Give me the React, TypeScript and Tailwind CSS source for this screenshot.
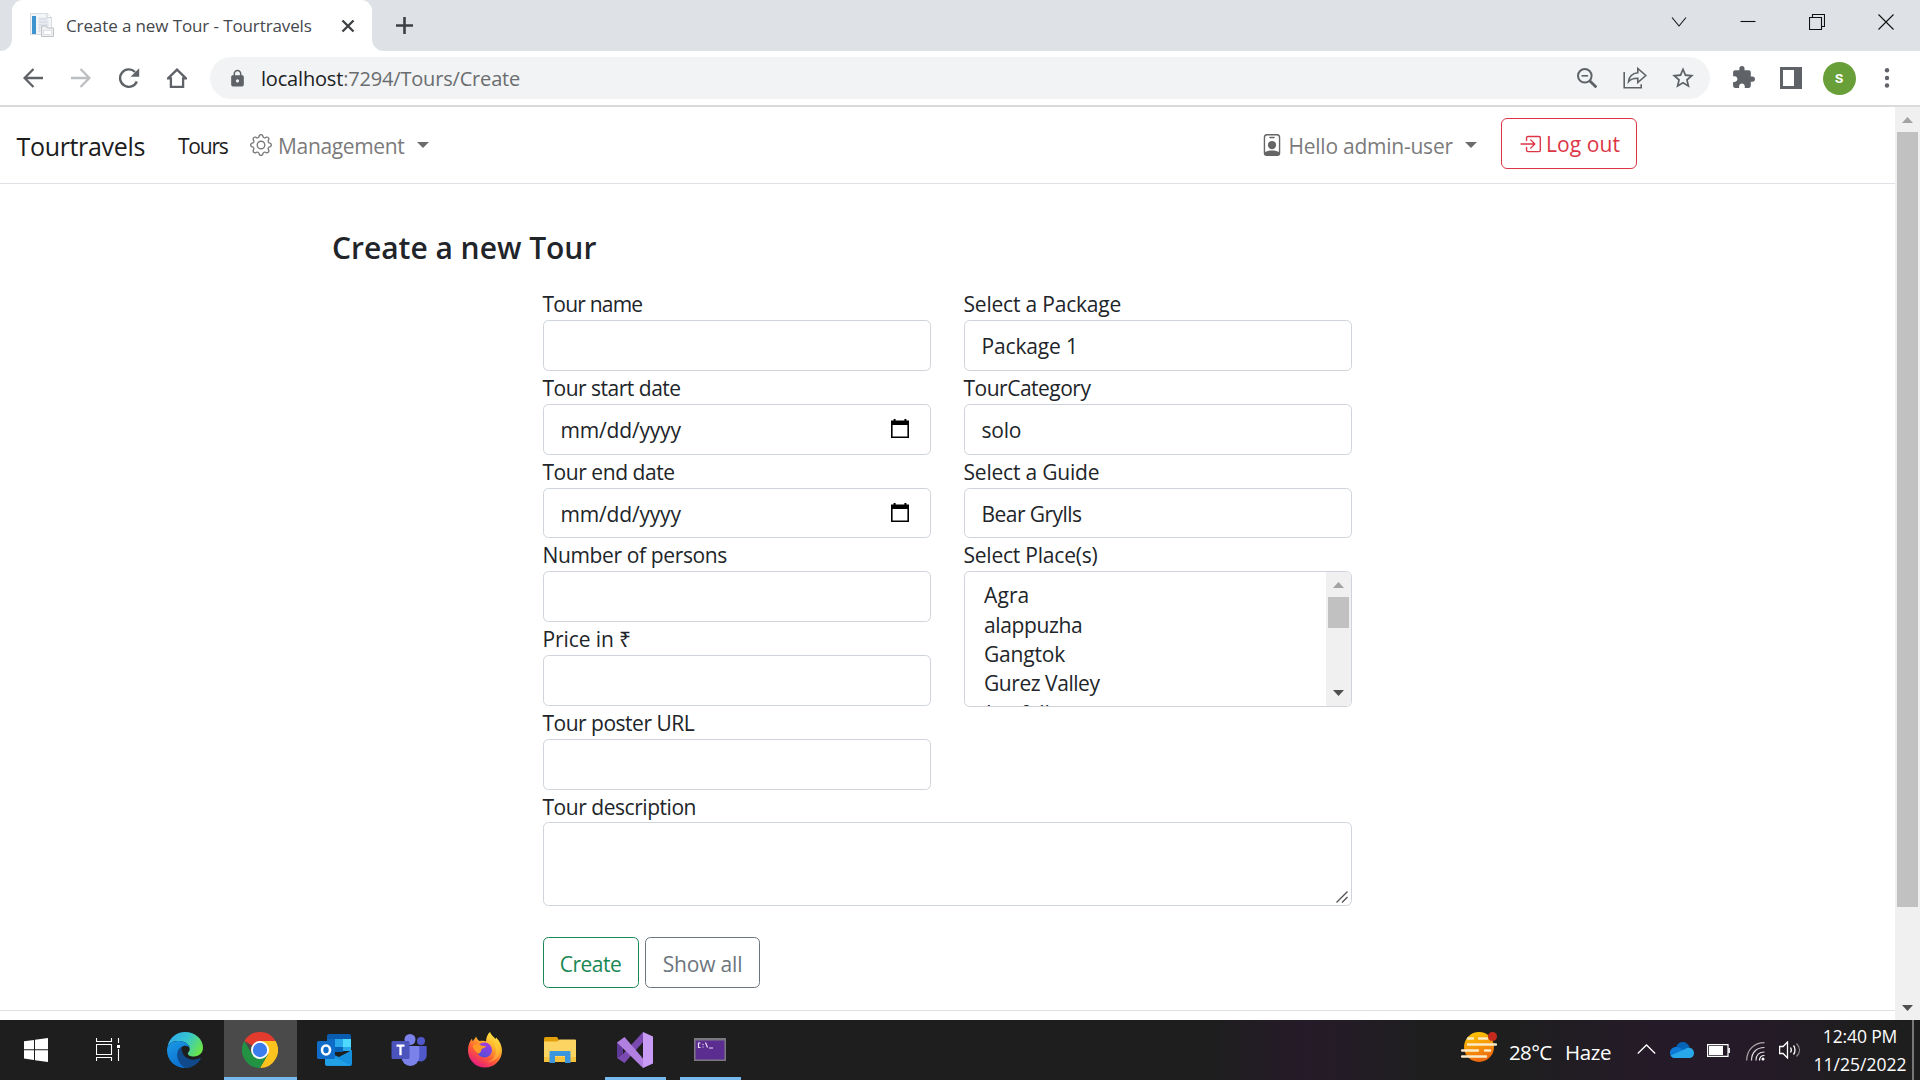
import type { ReactNode } from "react";
import { BsBoxArrowInRight, BsGear, BsPersonBadge } from "react-icons/bs";
import { MdExtension, MdLock, MdStarBorder } from "react-icons/md";

function TabStrip() {
  return (
    <div className="flex h-[51px] items-stretch bg-[#dee1e6]">
      <div className="w-3 bg-white">
        <div className="h-full w-full rounded-br-[12px] bg-[#dee1e6]" />
      </div>
      <div className="flex w-[360px] items-center rounded-t-[11px] bg-white pl-[18px]">
        <svg className="mb-px h-6 w-6 shrink-0" viewBox="0 0 24 24">
          <path d="M.5.5h17l4 4V21.500H.5z" fill="#f4f5f7" stroke="#cfd3d8" strokeWidth="0.8" />
          <path d="M17 .5v4h4.500" fill="#fff" stroke="#b8bcc2" strokeWidth="0.7" />
          <rect x="2" y="3" width="4" height="18" fill="#3d94cf" />
          <path d="M8.500 6h9M8.500 9h10M8.500 12h10M8.500 15h2M8.500 18h2" stroke="#dde2ea" strokeWidth="2.400" />
          <path d="M11.500 13h5l1 2h6v8.500h-12z" fill="#eff0f2" stroke="#b3b6ba" strokeWidth="0.8" />
          <rect x="13.500" y="17.500" width="8" height="4" fill="#fff" stroke="#cfd3d8" strokeWidth="0.6" />
        </svg>
        <span className="ml-[12px] w-[258px] text-[17px] tracking-[-0.110px] text-[#45484d]">
          Create a new Tour - Tourtravels
        </span>
        <svg className="ml-[17px] h-[14px] w-[14px] shrink-0" viewBox="0 0 14 14">
          <path d="M1.500 1.500l11 11M12.500 1.500l-11 11" stroke="#3c4043" strokeWidth="2.300" />
        </svg>
      </div>
      <div className="w-3 bg-white">
        <div className="h-full w-full rounded-bl-[12px] bg-[#dee1e6]" />
      </div>
      <svg className="ml-[12px] mt-[17px] h-[17px] w-[17px]" viewBox="0 0 17 17">
        <path d="M8.500 0v17M0 8.500h17" stroke="#3c4043" strokeWidth="2.600" />
      </svg>
      <div className="ml-auto flex h-[43px] items-center">
        <WindowButton>
          <path d="M1 3.500l7 8.500 7-8.500" />
        </WindowButton>
        <WindowButton>
          <path d="M.5 7.500h15" />
        </WindowButton>
        <WindowButton>
          <path d="M.5 3.500h12v12H.5zM3.500 3.500V.5h12v12h-3" />
        </WindowButton>
        <WindowButton>
          <path d="M.5.5l15 15M15.500.5l-15 15" />
        </WindowButton>
      </div>
    </div>
  );
}

function WindowButton({ children }: { children: ReactNode }) {
  return (
    <button className="flex w-[69px] justify-center">
      <svg className="h-4 w-4" viewBox="0 0 16 16" fill="none" stroke="#111" strokeWidth="1.100">
        {children}
      </svg>
    </button>
  );
}

function Cell({ children }: { children: ReactNode }) {
  return <button className="flex h-full w-12 shrink-0 items-center justify-center">{children}</button>;
}

function Toolbar() {
  return (
    <div className="flex h-[56px] items-start border-b-2 border-[#d9dadc] bg-white pl-[9px] text-[#5f6368]">
      <div className="mt-[6px] flex h-[42px] items-center">
        <Cell>
          <svg className="h-5 w-5" viewBox="0 0 20 20" fill="none" stroke="#5f6368" strokeWidth="2.300">
            <path d="M20 10H2M10.500 1L1.600 10l8.900 9" />
          </svg>
        </Cell>
        <Cell>
          <svg className="h-5 w-5" viewBox="0 0 20 20" fill="none" stroke="#bcbec1" strokeWidth="2.300">
            <path d="M0 10h18M9.500 1l8.900 9-8.900 9" />
          </svg>
        </Cell>
        <Cell>
          <svg className="h-5 w-5.5" viewBox="0 0 22 20">
            <path d="M18.800 13.500A8.700 8.700 0 1 1 17 4" fill="none" stroke="#5f6368" strokeWidth="2.400" />
            <path d="M21.200.2v8.600h-8.600z" fill="#5f6368" />
          </svg>
        </Cell>
        <Cell>
          <svg className="h-5 w-5" viewBox="0 0 20 20" fill="none" stroke="#5f6368" strokeWidth="2.300">
            <path d="M1 10.400L10 1.600l9 8.800h-2.900v8.400H3.900v-8.400z" />
          </svg>
        </Cell>
      </div>
      <div className="ml-[9px] mt-[6px] flex h-[42px] w-[1500px] items-center rounded-full bg-[#f1f3f4] pl-[17.500px]">
        <MdLock size={19} />
        <span className="ml-[14.500px] pt-[2px] text-[20px] tracking-[-0.180px] text-[#6a6d70]">
          <span className="text-[#202124]">localhost</span>:7294/Tours/Create
        </span>
        <div className="ml-auto mr-[3px] flex h-full items-center">
          <Cell>
            <svg className="h-5 w-5" viewBox="0 0 20 20" fill="none" stroke="#5f6368">
              <circle cx="7.800" cy="7.800" r="6.800" strokeWidth="2" />
              <path d="M12.400 12.400l7 7" strokeWidth="2.800" />
              <path d="M4.500 7.800h6.600" strokeWidth="1.600" />
            </svg>
          </Cell>
          <Cell>
            <svg className="h-[22px] w-6" viewBox="0 0 24 22" fill="none" stroke="#5f6368" strokeWidth="1.600">
              <path d="M1.200 5v15.800h17v-3.500" />
              <path d="M5.500 14.800c.6-6 4.200-8.500 9.300-9V1.500l8 7-8 7v-4.200c-4-.1-7 .8-9.300 3.500z" />
            </svg>
          </Cell>
          <Cell>
            <MdStarBorder size={26} />
          </Cell>
        </div>
      </div>
      <div className="ml-[9px] mt-[6px] flex h-[42px] items-center">
        <Cell>
          <MdExtension size={25} className="mb-px" />
        </Cell>
        <Cell>
          <svg className="h-[22px] w-[22px]" viewBox="0 0 22 22">
            <rect width="22" height="22" fill="#5f6368" />
            <rect x="3" y="3" width="11" height="16" fill="#fff" />
          </svg>
        </Cell>
        <Cell>
          <span className="flex h-[33px] w-[33px] items-center justify-center rounded-full bg-[#689f38] font-[Roboto] text-[17px] font-medium text-white">
            s
          </span>
        </Cell>
        <Cell>
          <svg className="h-5 w-5" viewBox="0 0 20 20" fill="#5f6368">
            <circle cx="10" cy="2.200" r="2.200" />
            <circle cx="10" cy="10" r="2.200" />
            <circle cx="10" cy="17.500" r="2.200" />
          </svg>
        </Cell>
      </div>
    </div>
  );
}

function Caret() {
  return (
    <svg className="h-[6px] w-3" viewBox="0 0 12 6">
      <path d="M0 0h12L6 6z" fill="#6c6c6c" />
    </svg>
  );
}

function Navbar() {
  return (
    <nav className="flex h-[77px] items-center border-b border-[#dee2e6] text-[21px] text-[#7b7b7b]">
      <a className="ml-[16.500px] w-[161.500px] pt-[3px] text-[25px] tracking-[-0.330px] text-[#1c1c1c]">Tourtravels</a>
      <a className="w-[72px] pt-1 tracking-[-1.200px] text-[#1c1c1c]">Tours</a>
      <a className="flex w-[179px] items-center">
        <BsGear size={22} />
        <span className="ml-[6px] w-[138.500px] pt-1 tracking-[-0.340px]">Management</span>
        <Caret />
      </a>
      <a className="ml-auto flex items-center">
        <BsPersonBadge size={22} className="text-[#666]" />
        <span className="ml-[5.500px] w-[176px] pt-1 tracking-[-0.240px]">Hello admin-user</span>
        <Caret />
      </a>
      <button className="mb-[3px] ml-[24.500px] mr-[258px] flex h-[51px] w-[136px] items-center rounded-[6px] border border-[#dc3545] pl-[17px] text-[#dc3545]">
        <BsBoxArrowInRight size={22} />
        <span className="ml-[5px] whitespace-nowrap pt-[3px] tracking-[0.100px]">Log out</span>
      </button>
    </nav>
  );
}

const boxClass =
  "flex h-[50.800px] items-center rounded-[5.500px] border border-[#ced4da] bg-white pl-[17px] pt-[2.500px] leading-[33px]";

function Field({ label, labelClass, children }: { label: string; labelClass: string; children?: ReactNode }) {
  return (
    <label className="block">
      <span className={`block h-[33px] leading-[35px] ${labelClass}`}>{label}</span>
      <span className={boxClass}>{children}</span>
    </label>
  );
}

function DateValue() {
  return (
    <>
      <span className="tracking-[-0.180px]">mm/dd/yyyy</span>
      <svg className="mb-[3px] ml-auto mr-[21px] h-5 w-[18px]" viewBox="0 0 18 20">
        <path d="M.8 3.500h16.400v14.800H.8z" fill="none" stroke="#000" strokeWidth="1.600" />
        <path d="M0 1.500h18V6H0zM2.600 0h2v2h-2zM13.400 0h2v2h-2z" fill="#000" />
      </svg>
    </>
  );
}

function Arrow({ up }: { up?: boolean }) {
  return (
    <svg className="h-[6px] w-[11px]" viewBox="0 0 11 6">
      {up ? <path d="M0 6h11L5.500 0z" fill="#a3a3a3" /> : <path d="M0 0h11L5.500 6z" fill="#505050" />}
    </svg>
  );
}

function PlacesList() {
  return (
    <div className="flex h-[135.500px] overflow-hidden rounded-[5.500px] border border-[#ced4da]">
      <ul className="flex-1 pl-[19.500px] pt-[9px] leading-[29.300px]">
        <li className="tracking-[0.100px]">Agra</li>
        <li className="tracking-[-0.380px]">alappuzha</li>
        <li className="tracking-[-0.180px]">Gangtok</li>
        <li className="tracking-[-0.450px]">Gurez Valley</li>
        <li className="pl-[2px] tracking-[-0.100px]">Jog falls</li>
      </ul>
      <div className="flex w-[25px] flex-col items-center bg-[#f0f0f0] pb-[10px] pt-[10px]">
        <Arrow up />
        <div className="mt-[9px] h-[31px] w-[21px] bg-[#c1c1c1]" />
        <div className="mt-auto flex">
          <Arrow />
        </div>
      </div>
    </div>
  );
}

function TourForm() {
  return (
    <main className="flex-1 text-[21px] text-[#212529]">
      <h1 className="ml-[332px] pt-[41px] text-[30px] font-[560] leading-[46px] tracking-[-0.020px]">
        Create a new Tour
      </h1>
      <div className="ml-[542.500px] mt-[16px] w-[809px]">
        <div className="grid grid-cols-2 gap-x-[33px]">
          <div>
            <Field label="Tour name" labelClass="tracking-[-0.780px]" />
            <Field label="Tour start date" labelClass="tracking-[-0.500px]">
              <DateValue />
            </Field>
            <Field label="Tour end date" labelClass="tracking-[-0.450px]">
              <DateValue />
            </Field>
            <Field label="Number of persons" labelClass="tracking-[-0.370px]" />
            <Field label="Price in ₹" labelClass="tracking-[-0.100px]" />
            <Field label="Tour poster URL" labelClass="tracking-[-0.500px]" />
          </div>
          <div>
            <Field label="Select a Package" labelClass="tracking-[-0.200px]">
              <span className="tracking-[-0.150px]">Package 1</span>
            </Field>
            <Field label="TourCategory" labelClass="tracking-[-0.500px]">
              <span className="tracking-[-0.240px]">solo</span>
            </Field>
            <Field label="Select a Guide" labelClass="tracking-[-0.200px]">
              <span className="tracking-[-0.550px]">Bear Grylls</span>
            </Field>
            <div className="h-[33px] leading-[35px] tracking-[-0.220px]">Select Place(s)</div>
            <PlacesList />
          </div>
        </div>
        <div className="h-[32.200px] leading-[35px] tracking-[-0.460px]">Tour description</div>
        <div className="flex h-[84px] items-end justify-end rounded-[5.500px] border border-[#ced4da] p-[2px]">
          <svg className="mr-px h-3 w-3" viewBox="0 0 12 12" stroke="#555" strokeWidth="1.400">
            <path d="M.5 11.500l11-11M6 11.500L11.500 6" />
          </svg>
        </div>
        <div className="mt-[31.500px] flex gap-[6px]">
          <button className="h-[51px] w-24 rounded-[5.500px] border border-[#198754] pt-[3px] tracking-[-0.520px] text-[#198754]">
            Create
          </button>
          <button className="h-[51px] w-[115px] rounded-[5.500px] border border-[#6c757d] pl-px pt-[3px] tracking-[-0.180px] text-[#6c757d]">
            Show all
          </button>
        </div>
      </div>
      <div className="mt-[22px] border-t border-[#dee2e6]" />
    </main>
  );
}

function PageScrollbar() {
  return (
    <div className="flex w-[25px] flex-col items-center bg-[#f0f0f0] pb-[9px] pt-[10px]">
      <Arrow up />
      <div className="mt-[9px] h-[775px] w-[21px] bg-[#c1c1c1]" />
      <div className="mt-auto flex">
        <Arrow />
      </div>
    </div>
  );
}

function TaskButton({ children, bar }: { children: ReactNode; bar?: boolean }) {
  return (
    <div className="flex w-[75px] shrink-0 flex-col items-center">
      <div className="flex h-[57px] items-center pt-[3px]">{children}</div>
      {bar && <div className="h-[3px] w-[61px] bg-[#76b9ed]" />}
    </div>
  );
}

function EdgeIcon() {
  return (
    <svg className="h-9 w-9" viewBox="0 0 36 36">
      <defs>
        <linearGradient id="edgeTop" x1="0" y1="0.200" x2="1" y2="0.600">
          <stop offset="0" stopColor="#2fa8ee" />
          <stop offset="0.500" stopColor="#35c6d0" />
          <stop offset="1" stopColor="#6be548" />
        </linearGradient>
        <linearGradient id="edgeLeft" x1="0" y1="0" x2="0.500" y2="1">
          <stop offset="0" stopColor="#1b9be6" />
          <stop offset="1" stopColor="#0a6fd0" />
        </linearGradient>
      </defs>
      <path
        d="M.5 14.500C2.500 5.500 9.500 0 18 0c10.500 0 18 7.500 18 15.500 0 5.500-4 8.900-8.900 8.900-4.600 0-6.300-1.600-6.300-3 0-1 1.900-1.800 1.900-4.400C22.700 12.500 18 9 11.500 9 6.500 9 2.500 11 .5 14.500z"
        fill="url(#edgeTop)"
      />
      <path
        d="M0 18C0 12.500 5 9 11.500 9c6.500 0 10.500 3 11.200 7-2-2.600-6-3-8.700-.5-5 4.500-4 14.500 4.500 20.500C8 36 0 28.500 0 18z"
        fill="url(#edgeLeft)"
      />
      <path
        d="M14.500 15c-6.500 3-6 15 3.500 21 6.500.3 12.500-3.500 15.700-9 .4-.8-.3-1.200-1-.8-8.700 4-18.200-.2-18.200-11.200z"
        fill="#114a8b"
      />
    </svg>
  );
}

function ChromeIcon() {
  return (
    <svg className="h-9 w-9" viewBox="0 0 36 36">
      <path d="M18 18L2.410 9A18 18 0 0 1 33.590 9z" fill="#e33b2e" />
      <path d="M18 9h15.590A18 18 0 0 1 18 36l7.800-13.500z" fill="#fcc31e" />
      <path d="M2.410 9l7.800 13.500L18 27l7.800-4.500L18 36A18 18 0 0 1 2.410 9z" fill="#229342" />
      <circle cx="18" cy="18" r="9" fill="#fff" />
      <circle cx="18" cy="18" r="7.200" fill="#3b7ded" />
    </svg>
  );
}

function OutlookIcon() {
  return (
    <svg className="mr-[2px] h-9 w-9" viewBox="0 0 36 36">
      <path d="M11 4a2 2 0 0 1 2-2h20a2 2 0 0 1 2 2v14H11z" fill="#0a5cb0" />
      <path d="M11 7h8v9h-8z" fill="#0f6bbf" />
      <path d="M19 7h8v8h-8z" fill="#28a8ea" />
      <path d="M27 7h8v8h-8z" fill="#50d9ff" />
      <path d="M19 15h8v5h-8z" fill="#0364b8" />
      <path d="M27 15h8v4h-8z" fill="#28a8ea" />
      <path d="M9 19l14 6 13-7v14a2 2 0 0 1-2 2H11a2 2 0 0 1-2-2z" fill="#1490df" />
      <path d="M9 20l26 13.500H11a2 2 0 0 1-2-2z" fill="#28a8ea" opacity="0.700" />
      <rect x="1" y="9" width="18" height="18" rx="1.500" fill="#0f6cc9" />
      <ellipse cx="10" cy="18" rx="4" ry="4.500" fill="none" stroke="#fff" strokeWidth="2.600" />
    </svg>
  );
}

function TeamsIcon() {
  return (
    <svg className="mr-[2px] h-9 w-9" viewBox="0 0 36 36">
      <circle cx="30" cy="9" r="4" fill="#5059c9" />
      <path d="M26 14h8.500a1.200 1.200 0 0 1 1.200 1.200V23c0 4-3 6.500-6 6.500-2.500 0-4-1-5-2.500z" fill="#5059c9" />
      <circle cx="19" cy="7.500" r="5.500" fill="#7b83eb" />
      <path d="M10.500 14H27a1.300 1.300 0 0 1 1.300 1.300V25a8.900 8.900 0 0 1-17.800 0z" fill="#7b83eb" />
      <rect x="0.500" y="9" width="18" height="18" rx="1.500" fill="#4b53bc" />
      <path d="M5.500 13.700h8M9.500 13.700v9.500" stroke="#fff" strokeWidth="2.300" />
    </svg>
  );
}

function FirefoxIcon() {
  return (
    <svg className="h-9 w-9" viewBox="0 0 36 36">
      <defs>
        <linearGradient id="fox" x1="0.850" y1="0" x2="0.250" y2="1">
          <stop offset="0" stopColor="#fff44f" />
          <stop offset="0.350" stopColor="#ffb42a" />
          <stop offset="0.650" stopColor="#ff5a36" />
          <stop offset="1" stopColor="#e31587" />
        </linearGradient>
        <linearGradient id="foxGlobe" x1="0.700" y1="0" x2="0.300" y2="1">
          <stop offset="0" stopColor="#a43be0" />
          <stop offset="1" stopColor="#4f4fd8" />
        </linearGradient>
      </defs>
      <path
        d="M23 0c1 3 3.500 4.500 5.500 7l.7-1.500C33 9.500 35 14 35 18.500 35 28 27.500 35.500 18 35.500S1 28 1 18.500c0-5 1.500-9 4-12l.7 3C7 7 8.500 6 9 4.500c1 2 2 3.500 3.500 4.500 3-.5 6 0 6.500.5C19 6 20.500 2 23 0z"
        fill="url(#fox)"
      />
      <path d="M27 12c4 6 2 16-7 18 9 .5 14-7 12-14-1-3-3-5-4-8z" fill="#ffd23c" opacity="0.450" />
      <circle cx="17.500" cy="18" r="7.500" fill="url(#foxGlobe)" />
      <path
        d="M5.500 14c2.500-2 5-2 7-1.500 1.500 1 4.500 1.500 6.500 1.500-.5 2-3.500 2-4.500 3.500-1 2-.5 3.500-3 4-2.500-1.500-5-4-6-7.500z"
        fill="#ff9a26"
      />
    </svg>
  );
}

function ExplorerIcon() {
  return (
    <svg className="h-9 w-9" viewBox="0 0 36 36">
      <path d="M2 6.500A1.500 1.500 0 0 1 3.500 5H15l2 3-3 3H2z" fill="#e2a008" />
      <path d="M2 9.500h13l2.500-2H33a1 1 0 0 1 1 1V29a1 1 0 0 1-1 1H3a1 1 0 0 1-1-1z" fill="#fcd462" />
      <path d="M2 25h32v4a1 1 0 0 1-1 1H3a1 1 0 0 1-1-1z" fill="#f8c33c" />
      <path d="M7.500 31V20a1 1 0 0 1 1-1h19a1 1 0 0 1 1 1v11h-5.500v-7H13v7z" fill="#3a96dd" />
    </svg>
  );
}

function VisualStudioIcon() {
  return (
    <svg className="h-9 w-9" viewBox="0 0 36 36">
      <path d="M0 10.500L6 14v8l-6 4z" fill="#5f3796" />
      <path d="M0 26l6-4L26 0v10L7.500 31z" fill="#7a4ab0" />
      <path d="M0 10.500L7.500 5 26 26.500V36z" fill="#b07fe0" />
      <path d="M26 0l10 4.500v27L26 36z" fill="#c89bf5" />
    </svg>
  );
}

function TerminalIcon() {
  return (
    <svg className="h-9 w-9" viewBox="0 0 36 36">
      <rect x="2" y="6" width="32" height="23" fill="#7b7880" />
      <rect x="3.500" y="8.500" width="29" height="19" fill="#5c2d91" />
      <path
        d="M8.500 11H6.500v4.500h2M11 12v1M11 14.500v1M13.500 10.500l2 5M17 16h4"
        fill="none"
        stroke="#e6dcf0"
        strokeWidth="1.200"
      />
    </svg>
  );
}

function Taskbar() {
  return (
    <div className="flex h-[60px] bg-[#1e1e1e] bg-[linear-gradient(90deg,transparent_63%,#261b29_68%,#1e1e1f_74%,#1e1e1f_79%,#251b28_86%,#251a28_91%,#1e1e1e_97%)] text-white">
      <div className="flex w-[72px] items-center justify-center">
        <svg className="h-6 w-6" viewBox="0 0 24 24" fill="#fff">
          <path d="M0 3.300l10-1.400v9.400H0zM11 1.700L24 0v11.300H11zM0 12.300h10v9.600L0 20.600zM11 12.300h13V24l-13-1.800z" />
        </svg>
      </div>
      <div className="flex w-[75.500px] items-center pl-6">
        <svg className="h-6 w-[25px]" viewBox="0 0 25 24" fill="none" stroke="#fff" strokeWidth="1.100">
          <path d="M.5 0v3.500h15V0M.5 6.500h15v10H.5zM.5 23v-3.500h15V23M22.500 0v5M22.500 11v12" />
          <rect x="21" y="7" width="3" height="3" fill="#fff" stroke="none" />
        </svg>
      </div>
      <TaskButton>
        <EdgeIcon />
      </TaskButton>
      <div className="ml-[1.500px] flex w-[73px] flex-col items-center bg-[#4a4a4a]">
        <div className="flex h-[57px] items-center pr-px pt-[3px]">
          <ChromeIcon />
        </div>
        <div className="h-[3px] w-full bg-[#76b9ed]" />
      </div>
      <div className="w-[0.500px]" />
      <TaskButton>
        <OutlookIcon />
      </TaskButton>
      <TaskButton>
        <TeamsIcon />
      </TaskButton>
      <TaskButton>
        <FirefoxIcon />
      </TaskButton>
      <TaskButton>
        <ExplorerIcon />
      </TaskButton>
      <TaskButton bar>
        <VisualStudioIcon />
      </TaskButton>
      <TaskButton bar>
        <TerminalIcon />
      </TaskButton>
      <div className="ml-auto flex items-center">
        <svg className="mb-[6px] h-[31px] w-9" viewBox="0 0 36 31">
          <defs>
            <linearGradient id="haze" x1="0" y1="0" x2="0.300" y2="1">
              <stop offset="0" stopColor="#ffd000" />
              <stop offset="1" stopColor="#ee6a10" />
            </linearGradient>
          </defs>
          <circle cx="18" cy="15" r="15" fill="url(#haze)" />
          <g stroke="#fdebc8" strokeWidth="2.400" strokeLinecap="round">
            <path d="M7 6.500h5M18 6.500h8M7 12.500h28M1 18.500h16M24 18.500h5M1 24.500h24" />
          </g>
          <circle cx="31.500" cy="4.500" r="4.500" fill="#c42b1c" />
        </svg>
        <span className="ml-[12px] w-[56px] pt-[5px] text-[20.500px] tracking-[-0.640px]">28°C</span>
        <span className="w-[72px] pt-[5px] text-[20.500px] tracking-[-0.400px]">Haze</span>
        <svg className="mb-[2px] h-[10px] w-[19px]" viewBox="0 0 19 10" fill="none" stroke="#fff" strokeWidth="1.300">
          <path d="M.8 9.500l8.700-8.500 8.700 8.500" />
        </svg>
        <svg className="ml-[14px] h-4 w-6" viewBox="0 0 24 16">
          <path d="M6 7C6 3 9 0 12.500 0 16 0 18.500 2 19.500 5L12 11z" fill="#0364b8" />
          <path d="M0 11c0-3.500 2.500-6 6-6 3 0 5 1.500 8 3.500L8 16H5c-3 0-5-2-5-5z" fill="#0f7ad6" />
          <path d="M17 6c4-1 7 1.500 7 5 0 3-2 5-5 5H5c-2 0-3.500-1-4.300-2.500L13 8z" fill="#28a8ea" />
        </svg>
        <svg className="ml-[13px] h-[13px] w-[23px]" viewBox="0 0 23 13">
          <path d="M.6.6h20.400v11.800H.6zM22.300 4v5" fill="none" stroke="#fff" strokeWidth="1.200" />
          <rect x="2" y="2" width="14" height="9" fill="#fff" />
        </svg>
        <svg className="ml-[16px] mt-[3px] h-[19px] w-[19px]" viewBox="0 0 19 19" fill="none" strokeWidth="1.200">
          <path d="M.7 18.500C.7 8 8 .7 18.500.7" stroke="#aaa" />
          <path d="M5.500 18.500c0-8 5-13 13-13M10 18.500c0-5.500 3-8.500 8.500-8.500" stroke="#ddd" />
          <path d="M13.500 18.500c0-3 2-5 5-5" stroke="#fff" />
          <circle cx="17" cy="17" r="1.500" fill="#fff" />
        </svg>
        <svg className="ml-[14px] h-[18px] w-[22px]" viewBox="0 0 22 18" fill="none" stroke="#fff" strokeWidth="1.300">
          <path d="M.6 5.500h3.500L8.500 1v16l-4.400-4.500H.6z" />
          <path d="M11.500 6.500c1 1.500 1 3.500 0 5M14.500 4.500c2 2.500 2 6.500 0 9" />
          <path d="M17.500 2.500c4 4 4 9 0 13" stroke="#888" />
        </svg>
        <div className="mb-px w-[111px] pl-[7px] text-center text-[17.500px] leading-[28px]">
          <div className="tracking-[-0.140px]">12:40 PM</div>
          <div>11/25/2022</div>
        </div>
        <div className="mr-[6px] h-[60px] w-[2px] bg-[#777]" />
      </div>
    </div>
  );
}

export default function App() {
  return (
    <div className="flex h-[1080px] w-[1920px] flex-col overflow-hidden bg-white font-['Open_Sans','Noto_Sans',sans-serif]">
      <TabStrip />
      <Toolbar />
      <div className="flex h-[913px]">
        <div className="flex w-[1895px] flex-col">
          <Navbar />
          <TourForm />
        </div>
        <PageScrollbar />
      </div>
      <Taskbar />
    </div>
  );
}
